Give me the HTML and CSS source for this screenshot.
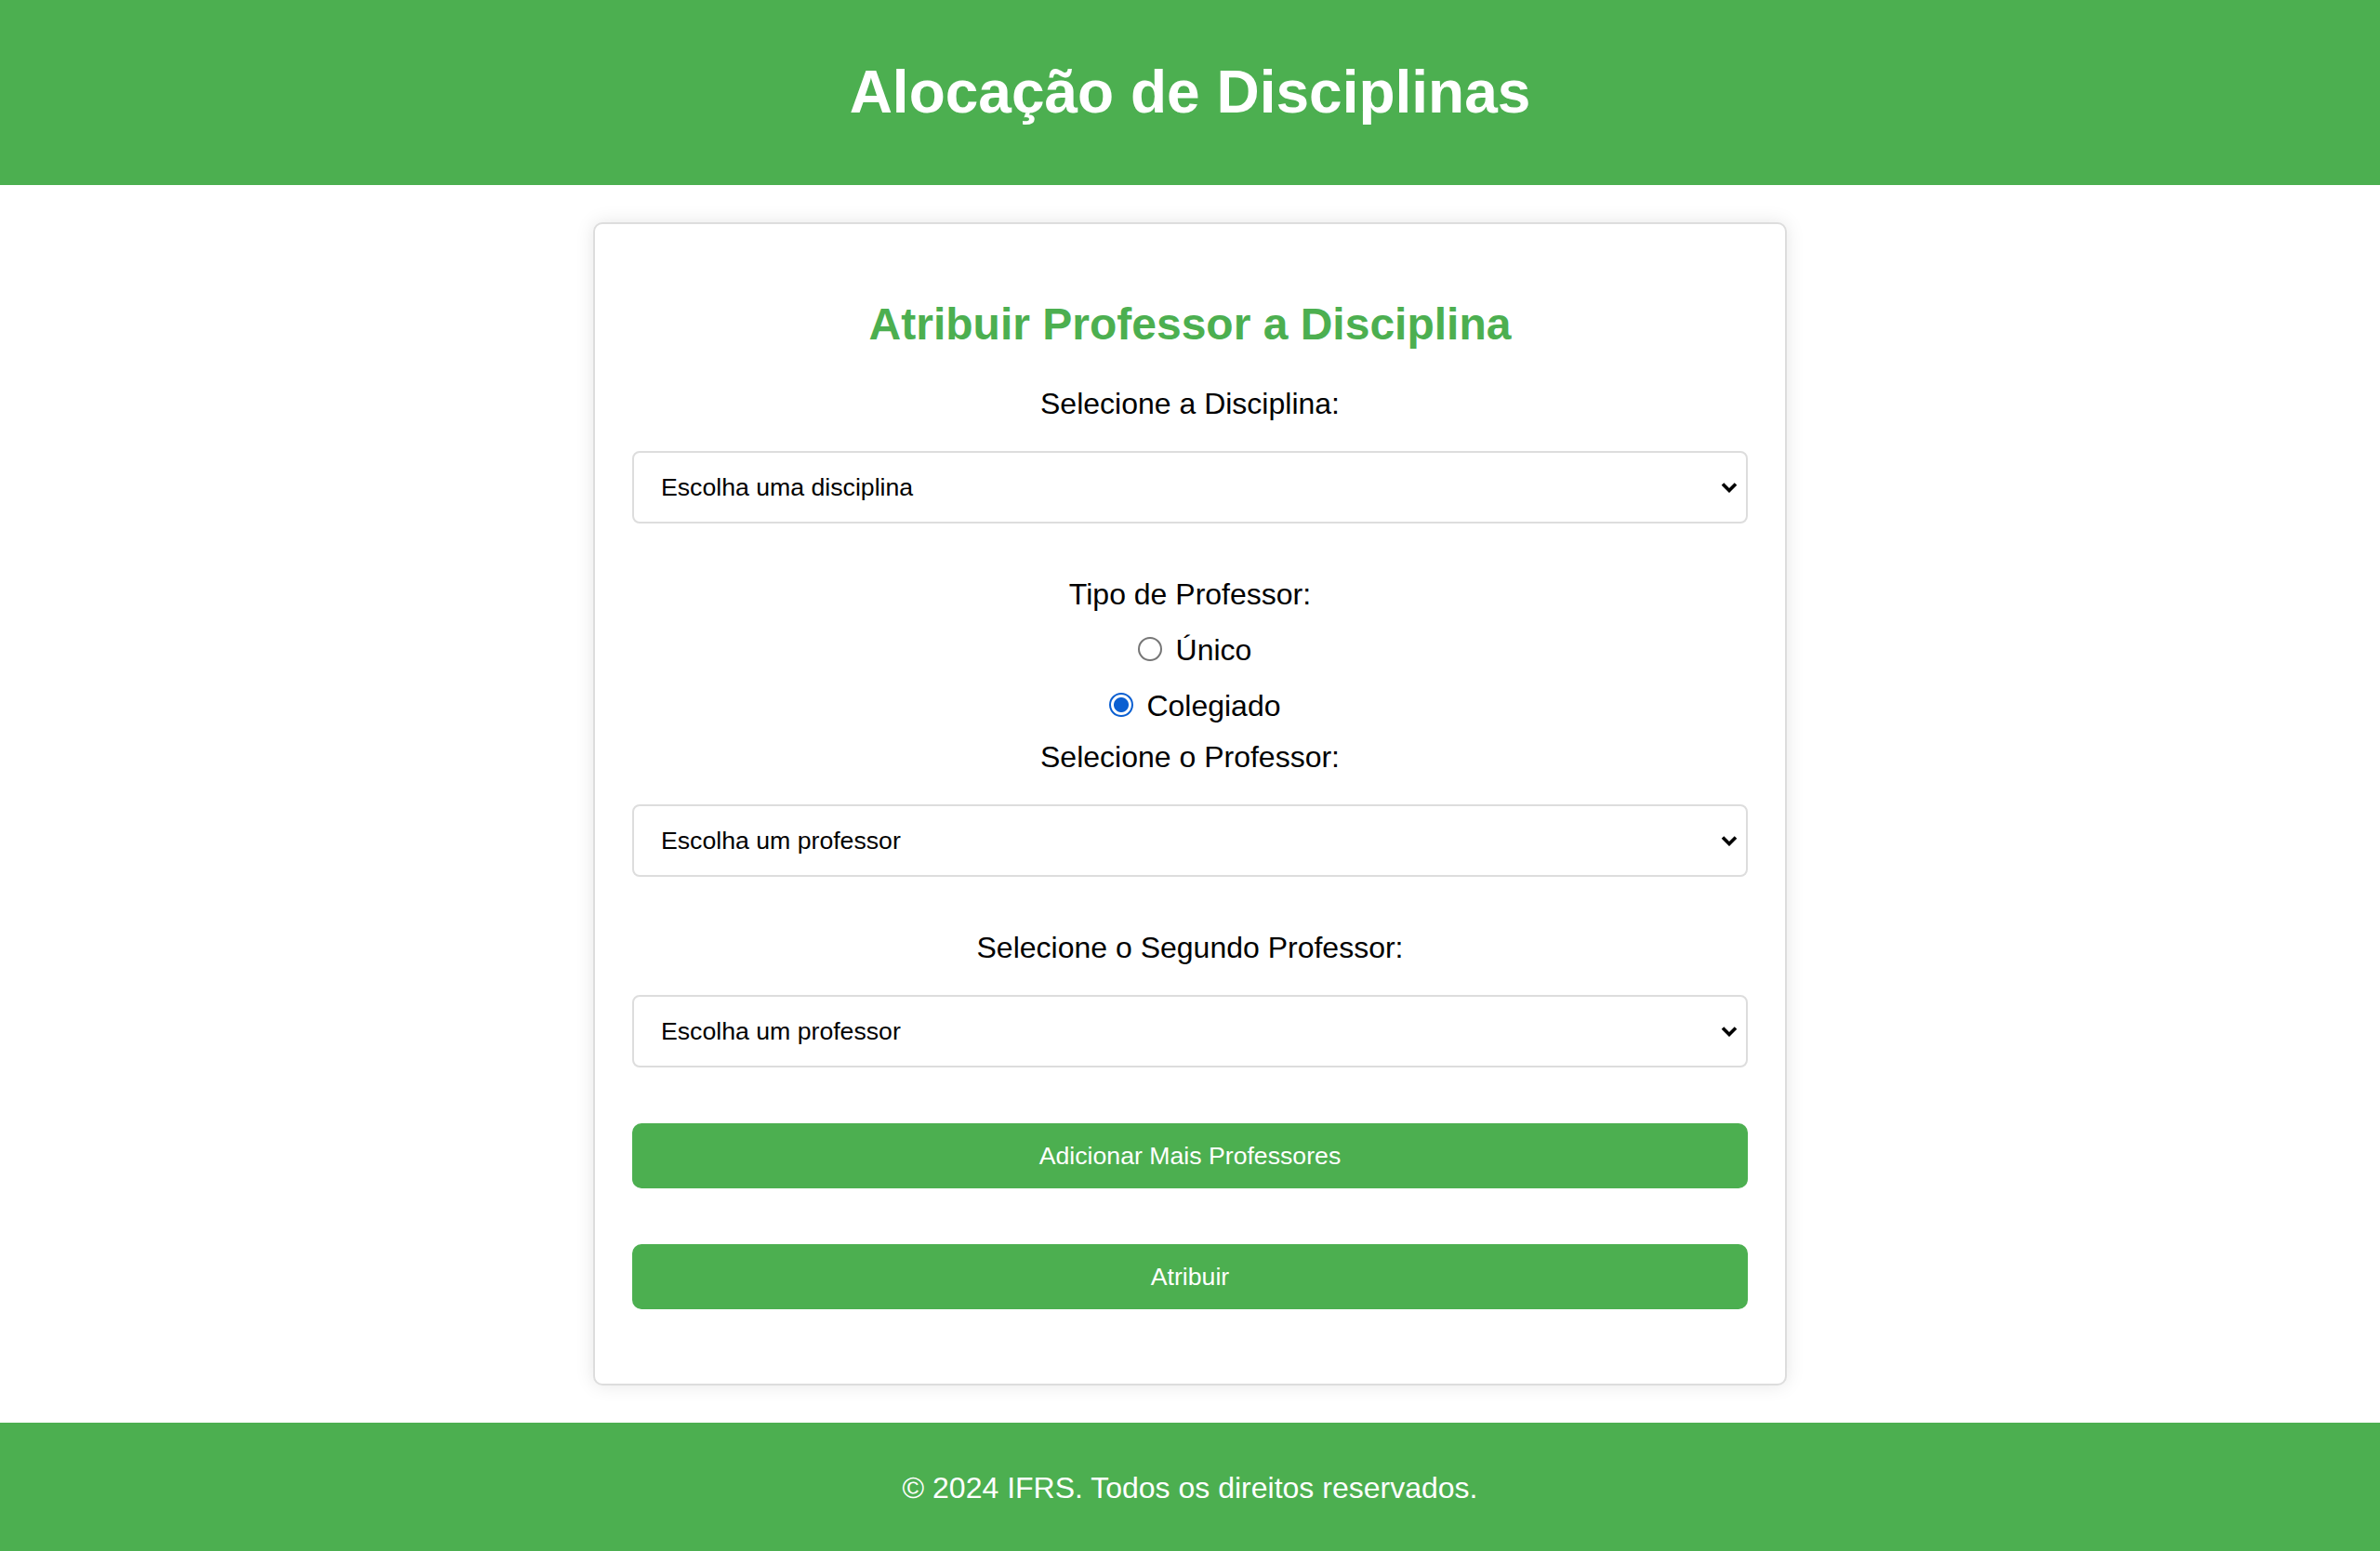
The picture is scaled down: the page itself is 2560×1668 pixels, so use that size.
FILE: index.html
```html
<!DOCTYPE html>
<html lang="pt-BR">
<head>
<meta charset="utf-8">
<title>Alocação de Disciplinas</title>
<link rel="stylesheet" href="styles.css">
</head>
<body>
<header class="site-header">
  <h1 class="site-title">Alocação de Disciplinas</h1>
</header>
<main class="page">
  <section class="card">
    <h2 class="card-title">Atribuir Professor a Disciplina</h2>
    <form class="form">
      <label class="field-label" for="disciplina">Selecione a Disciplina:</label>
      <div class="select-wrap">
        <select id="disciplina" class="select"><option>Escolha uma disciplina</option></select>
        <svg class="chevron" width="18" height="12" viewBox="0 0 18 12"><path d="M2 2.5 L9 9.5 L16 2.5" fill="none" stroke="#000" stroke-width="3.6"/></svg>
      </div>

      <div class="radio-group">
        <div class="field-label group-label">Tipo de Professor:</div>
        <div class="radio-row"><input type="radio" class="radio" id="unico" name="tipo"> <label for="unico">Único</label></div>
        <div class="radio-row"><input type="radio" class="radio" id="colegiado" name="tipo" checked> <label for="colegiado">Colegiado</label></div>
      </div>

      <label class="field-label" for="professor">Selecione o Professor:</label>
      <div class="select-wrap">
        <select id="professor" class="select"><option>Escolha um professor</option></select>
        <svg class="chevron" width="18" height="12" viewBox="0 0 18 12"><path d="M2 2.5 L9 9.5 L16 2.5" fill="none" stroke="#000" stroke-width="3.6"/></svg>
      </div>

      <label class="field-label" for="professor2">Selecione o Segundo Professor:</label>
      <div class="select-wrap">
        <select id="professor2" class="select"><option>Escolha um professor</option></select>
        <svg class="chevron" width="18" height="12" viewBox="0 0 18 12"><path d="M2 2.5 L9 9.5 L16 2.5" fill="none" stroke="#000" stroke-width="3.6"/></svg>
      </div>

      <div class="actions">
        <button type="button" class="btn">Adicionar Mais Professores</button>
        <button type="submit" class="btn">Atribuir</button>
      </div>
    </form>
  </section>
</main>
<footer class="site-footer">
  <p class="footer-text">© 2024 IFRS. Todos os direitos reservados.</p>
</footer>
</body>
</html>
```

FILE: styles.css
```css
html, body {
  margin: 0;
  padding: 0;
}

body {
  font-family: "Liberation Sans", Arial, sans-serif;
  font-size: 32px;
  line-height: normal;
  color: #000;
  background: #fff;
}

.site-header {
  background: #4CAF50;
  color: #fff;
  text-align: center;
  padding: 20px 0;
}

.site-title {
  margin: 42px 0 43px;
  font-size: 64px;
  font-weight: bold;
}

.page {
  padding: 40px 0;
}

.card {
  width: 1200px;
  margin: 0 auto;
  padding: 40px;
  background: #fff;
  border: 2px solid #ddd;
  border-radius: 10px;
  box-shadow: 0 0 20px rgba(0, 0, 0, 0.1);
  text-align: center;
}

.card-title {
  margin: 40px 0 40px;
  font-size: 48px;
  font-weight: bold;
  color: #4CAF50;
}

.form {
  margin: 0;
}

.field-label {
  display: block;
  margin: 0 0 32px;
}

.select-wrap {
  position: relative;
  margin-bottom: 58px;
}

.select {
  display: block;
  width: 100%;
  height: 78px;
  margin: 0;
  padding: 0 60px 0 29px;
  box-sizing: border-box;
  appearance: none;
  -webkit-appearance: none;
  background: #fff;
  border: 2px solid #ddd;
  border-radius: 8px;
  font-family: "Liberation Sans", Arial, sans-serif;
  font-size: 26.67px;
  color: #000;
  text-align: left;
}

.chevron {
  position: absolute;
  right: 11px;
  top: 33px;
  pointer-events: none;
}

.radio-group {
  margin-bottom: 18px;
}

.group-label {
  margin-bottom: 0;
}

.radio-row {
  margin-top: 23px;
}

.radio {
  appearance: none;
  -webkit-appearance: none;
  width: 26px;
  height: 26px;
  margin: 0 6px 0 10px;
  box-sizing: border-box;
  border: 2px solid #767676;
  border-radius: 50%;
  background: #fff;
  vertical-align: -1px;
}

.radio:checked {
  border: 2.5px solid #0b5fd1;
  background: radial-gradient(circle, #0b5fd1 0 7.5px, #fff 8.5px);
}

.actions {
  display: flex;
  flex-direction: column;
  gap: 60px;
  margin: 60px 0 40px;
}

.btn {
  display: block;
  width: 100%;
  height: 70px;
  margin: 0;
  padding: 0;
  border: none;
  border-radius: 10px;
  background: #4CAF50;
  color: #fff;
  font-family: "Liberation Sans", Arial, sans-serif;
  font-size: 26.67px;
  cursor: pointer;
}

.site-footer {
  background: #4CAF50;
  color: #fff;
  text-align: center;
  padding: 20px 0;
}

.footer-text {
  margin: 32px 0;
}
```
